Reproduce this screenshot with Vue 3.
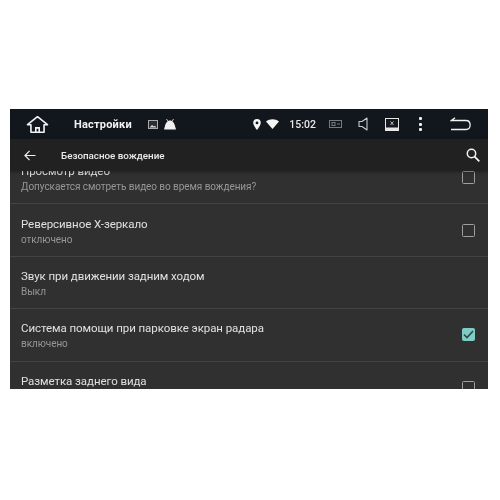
<script setup>
const rows = [
  { title: 'Просмотр видео', sub: 'Допускается смотреть видео во время вождения?', box: true },
  { title: 'Реверсивное Х-зеркало', sub: 'отключено', box: true },
  { title: 'Звук при движении задним ходом', sub: 'Выкл', box: false },
  { title: 'Система помощи при парковке экран радара', sub: 'включено', box: true, checked: true },
  // подпись последней строки уходит за край экрана
  { title: 'Разметка заднего вида', sub: '', box: true },
]
</script>

<template>
  <div class="page">
    <div class="screen">
      <header class="status">
        <svg class="home" width="23" height="19" viewBox="0 0 24 20" fill="none" stroke="#f2f2f2" stroke-width="1.7">
          <path d="M1.5 10.2 12 1.8l10.5 8.4h-3.6v8H5.1v-8z" stroke-linejoin="round" />
          <path d="M10.2 18v-4.4h3.6V18" />
        </svg>
        <span class="status-title">Настройки</span>
        <svg class="pic" width="10" height="9" viewBox="0 0 10 9">
          <rect x="0.5" y="0.5" width="9" height="8" fill="#2a2d31" stroke="#a9abad" />
          <path d="M1.5 7.5 4 5l2 1.5 1-.8 1.5 1.8z" fill="#d8d8d8" />
        </svg>
        <svg class="android" width="14" height="11" viewBox="0 0 14 11" fill="#f0f0f0">
          <path d="M1 10.500 2 7c.5-3 2.500-5.500 5-5.500S11.500 4 12 7l1 3.500z" />
          <path d="M3.500 0 5 2.500M10.500 0 9 2.500" stroke="#f0f0f0" stroke-width="0.8" />
        </svg>
        <span class="spacer"></span>
        <svg class="pin" width="8" height="11" viewBox="0 0 8 11">
          <path fill-rule="evenodd" fill="#f5f5f5" d="M4 0a3.800 3.800 0 0 1 3.800 3.800C7.800 6.500 4 11 4 11S.2 6.500.2 3.800A3.800 3.800 0 0 1 4 0zm0 2.500a1.400 1.400 0 1 0 0 2.800 1.400 1.400 0 0 0 0-2.800z" />
        </svg>
        <svg class="wifi" width="13" height="10" viewBox="0 0 13 10"><path fill="#f5f5f5" d="M0 2.500C3.600-.6 9.400-.6 13 2.500L6.500 10z" /></svg>
        <span class="clock">15:02</span>
        <svg class="cam" width="13" height="8" viewBox="0 0 13 8" fill="none" stroke="#777a7d">
          <rect x="0.500" y="0.500" width="12" height="7" />
          <rect x="3" y="2.500" width="3" height="3" />
          <path d="M8 4h3" />
        </svg>
        <svg class="speaker" width="10" height="14" viewBox="0 0 10 14" fill="none" stroke="#c9caca" stroke-width="1.100">
          <path d="M9 1 4 4.500H1v5h3L9 13z" stroke-linejoin="round" />
        </svg>
        <svg class="screen-x" width="14" height="13" viewBox="0 0 14 13">
          <rect x="0.500" y="0.500" width="13" height="9.500" fill="#15181e" stroke="#e6e6e6" />
          <rect x="0" y="10" width="14" height="3" fill="#e6e6e6" />
          <path d="M5.500 3.500l3 3.500m0-3.500-3 3.500" stroke="#e6e6e6" stroke-width="0.800" />
        </svg>
        <span class="dots"><i></i><i></i><i></i></span>
        <svg class="back" width="22" height="14" viewBox="0 0 22 14" fill="none" stroke="#f2f2f2" stroke-width="1.300">
          <path d="M5 .8 1.500 3.500H16c5.500 0 5.500 9 0 9H1" />
        </svg>
      </header>

      <div class="appbar">
        <svg class="arrow" width="12" height="11" viewBox="0 0 13 12" fill="none" stroke="#f0f0f0" stroke-width="1.300">
          <path d="M12.500 6H1M6 1 1 6l5 5" />
        </svg>
        <span class="appbar-title">Безопасное вождение</span>
        <span class="spacer"></span>
        <svg class="search" width="14" height="14" viewBox="0 0 14 14" fill="none" stroke="#f2f2f2" stroke-width="1.500">
          <circle cx="5.500" cy="5.500" r="4.200" />
          <path d="m8.600 8.600 4.700 4.700" stroke-width="1.800" />
        </svg>
      </div>

      <div class="list">
        <div v-for="row in rows" :key="row.title" class="row">
          <div class="texts">
            <div class="title">{{ row.title }}</div>
            <div class="sub">{{ row.sub }}</div>
          </div>
          <span v-if="row.box" class="box" :class="{ checked: row.checked }">
            <svg v-if="row.checked" width="11" height="9" viewBox="0 0 11 9" fill="none" stroke="#2b4a48" stroke-width="1.600">
              <path d="m1 4.500 3 3 6-6.500" />
            </svg>
          </span>
        </div>
      </div>
    </div>
  </div>
</template>

<style>
body {
  background: #fff;
}
</style>

<style scoped>
.page {
  width: 500px;
  height: 500px;
  padding: 109px 12px 0 10px;
  box-sizing: border-box;
  background: #fff;
  font-family: Roboto, "Liberation Sans", sans-serif;
}
.screen {
  height: 280px;
  display: flex;
  flex-direction: column;
  overflow: hidden;
  background: #303030;
  filter: blur(0.35px);
}
.status {
  flex: none;
  height: 30px;
  display: flex;
  align-items: center;
  background: #12161d;
  color: #f2f2f2;
}
.spacer {
  flex: 1;
}
.home {
  margin-left: 16px;
}
.status-title {
  margin-left: 25px;
  font-size: 11px;
  font-weight: 700;
  letter-spacing: 0.2px;
}
.pic {
  margin-left: 16px;
}
.android {
  margin-left: 5px;
}
.wifi {
  margin-left: 5px;
}
.clock {
  margin-left: 10px;
  font-size: 10.500px;
  font-weight: 500;
  color: #e8e8e8;
}
.cam {
  margin-left: 13px;
}
.speaker {
  margin-left: 16px;
}
.screen-x {
  margin-left: 17px;
}
.dots {
  margin-left: 20px;
  display: flex;
  flex-direction: column;
  gap: 2.500px;
}
.dots i {
  display: block;
  width: 3px;
  height: 3px;
  background: #eee;
  border-radius: 1px;
}
.back {
  margin-left: 28px;
  margin-right: 16px;
}
.appbar {
  flex: none;
  position: relative;
  z-index: 1;
  height: 32px;
  display: flex;
  align-items: center;
  background: #212121;
  box-shadow: 0 1px 3px rgba(0, 0, 0, 0.35);
}
.arrow {
  margin-left: 14px;
}
.appbar-title {
  margin-left: 25px;
  font-size: 9.800px;
  font-weight: 500;
  color: #ececec;
}
.search {
  margin-right: 8px;
}
.list {
  margin-top: -19px;
}
.row {
  height: 52.400px;
  box-sizing: border-box;
  display: flex;
  align-items: center;
  justify-content: space-between;
  padding: 0 13px 0 11px;
  border-bottom: 1px solid #424242;
}
.texts {
  padding-top: 2px;
}
.title {
  font-size: 11.500px;
  color: #e0e0e0;
  letter-spacing: -0.07px;
}
.sub {
  min-height: 12px;
  margin-top: 3px;
  font-size: 10px;
  color: #969696;
  letter-spacing: -0.07px;
}
.box {
  width: 13px;
  height: 13px;
  box-sizing: border-box;
  display: flex;
  align-items: center;
  justify-content: center;
  border: 1.500px solid #9e9e9e;
  border-radius: 1.500px;
}
.box.checked {
  background: #80cbc4;
  border-color: #80cbc4;
}
</style>
